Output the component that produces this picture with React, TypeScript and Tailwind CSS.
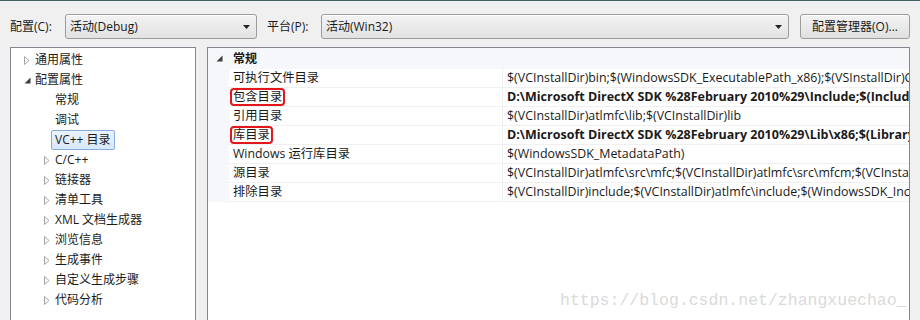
const font = "font-['Open_Sans','Noto_Sans_CJK_SC',sans-serif]";

const tree: { label: string; level: 0 | 1; state: "closed" | "open" | "none"; selected?: boolean }[] = [
  { label: "通用属性", level: 0, state: "closed" },
  { label: "配置属性", level: 0, state: "open" },
  { label: "常规", level: 1, state: "none" },
  { label: "调试", level: 1, state: "none" },
  { label: "VC++ 目录", level: 1, state: "none", selected: true },
  { label: "C/C++", level: 1, state: "closed" },
  { label: "链接器", level: 1, state: "closed" },
  { label: "清单工具", level: 1, state: "closed" },
  { label: "XML 文档生成器", level: 1, state: "closed" },
  { label: "浏览信息", level: 1, state: "closed" },
  { label: "生成事件", level: 1, state: "closed" },
  { label: "自定义生成步骤", level: 1, state: "closed" },
  { label: "代码分析", level: 1, state: "closed" },
];

// values are clipped by the grid edge, as in the dialog
const rows: { name: string; value: string; bold?: boolean; marked?: boolean }[] = [
  { name: "可执行文件目录", value: "$(VCInstallDir)bin;$(WindowsSDK_ExecutablePath_x86);$(VSInstallDir)C" },
  { name: "包含目录", value: "D:\\Microsoft DirectX SDK %28February 2010%29\\Include;$(Include", bold: true, marked: true },
  { name: "引用目录", value: "$(VCInstallDir)atlmfc\\lib;$(VCInstallDir)lib" },
  { name: "库目录", value: "D:\\Microsoft DirectX SDK %28February 2010%29\\Lib\\x86;$(Library", bold: true, marked: true },
  { name: "Windows 运行库目录", value: "$(WindowsSDK_MetadataPath)" },
  { name: "源目录", value: "$(VCInstallDir)atlmfc\\src\\mfc;$(VCInstallDir)atlmfc\\src\\mfcm;$(VCInstal" },
  { name: "排除目录", value: "$(VCInstallDir)include;$(VCInstallDir)atlmfc\\include;$(WindowsSDK_Incl" },
];

function Closed() {
  return (
    <svg width="6" height="9" viewBox="0 0 6 9" className="shrink-0">
      <path d="M0.5 0.5 L5 4.5 L0.5 8.5 Z" fill="white" stroke="#a6a6a6" strokeWidth="1" />
    </svg>
  );
}

function Open() {
  return (
    <svg width="7" height="7" viewBox="0 0 7 7" className="shrink-0">
      <path d="M6.5 0.5 L6.5 6.5 L0.5 6.5 Z" fill="#404040" />
    </svg>
  );
}

function Combo({ text, width }: { text: string; width: string }) {
  return (
    <div
      className={`${width} h-[25px] flex items-center justify-between pl-[4px] pr-[6px] rounded-[3px] border border-[#9c9c9c] bg-gradient-to-b from-[#f3f3f3] to-[#e2e2e2] shadow-[inset_0_1px_0_#fff]`}
    >
      <span className="text-[12px] text-[#1a1a1a]">{text}</span>
      <svg width="7" height="4" viewBox="0 0 7 4">
        <path d="M0 0 L7 0 L3.5 4 Z" fill="#222" />
      </svg>
    </div>
  );
}

export default function App() {
  return (
    <div className={`w-[920px] h-[320px] overflow-hidden bg-[#f0f0f0] border-t border-[#41605f] relative ${font}`}>
      {/* toolbar */}
      <div className="flex items-center h-[25px] mt-[13px] pl-[10px]">
        <span className="text-[12px] text-[#1a1a1a] w-[55px]">配置(C):</span>
        <Combo text="活动(Debug)" width="w-[192px]" />
        <span className="text-[12px] text-[#1a1a1a] ml-[10px] w-[54px]">平台(P):</span>
        <Combo text="活动(Win32)" width="w-[468px]" />
        <button className="ml-[11px] w-[110px] h-[25px] rounded-[3px] border border-[#9c9c9c] bg-gradient-to-b from-[#f3f3f3] to-[#e0e0e0] text-[12px] text-[#1a1a1a] shadow-[inset_0_1px_0_#fff]">
          配置管理器(O)...
        </button>
      </div>

      <div className="flex mt-[8px] pl-[10px] h-[300px]">
        {/* tree */}
        <div className="w-[186px] h-full bg-white border border-[#828790] pt-[2px] text-[12px] text-[#1a1a1a]">
          {tree.map((t) => (
            <div key={t.label} className={`h-[20px] flex items-center ${t.level === 0 ? "pl-[13px]" : "pl-[33px]"}`}>
              <span className="w-[11px] flex items-center">
                {t.state === "closed" && <Closed />}
                {t.state === "open" && <Open />}
              </span>
              {t.selected ? (
                <span className="-ml-[4px] h-[20px] px-[3px] flex items-center rounded-[2px] border border-[#84acdd] bg-gradient-to-b from-[#eaf3fd] to-[#d6e8fc]">
                  {t.label}
                </span>
              ) : (
                <span>{t.label}</span>
              )}
            </div>
          ))}
        </div>

        {/* property grid */}
        <div className="ml-[11px] w-[703px] h-full bg-white border border-[#828790] text-[12px] text-[#1a1a1a]">
          <div className="h-[21px] flex items-center bg-[#f5f7fb]">
            <span className="w-[21px] flex justify-center pl-[2px]">
              <Open />
            </span>
            <span className="ml-[4px] font-bold">常规</span>
          </div>
          <div className="flex">
            <div className="w-[21px] bg-[#f5f7fb]" />
            <div className="flex-1 min-w-0">
              {rows.map((r) => (
                <div key={r.name} className="h-[19px] flex border-b border-[#f0f0f0]">
                  <div className="w-[274px] shrink-0 flex items-center pl-[4px] text-[12.3px] border-r border-[#f0f0f0]">
                    {r.marked ? (
                      <span className="inline-block leading-[14px] -ml-[1px] pl-[1px] pr-[1px] rounded-[2px] ring-2 ring-[#e3161b]">
                        {r.name}
                      </span>
                    ) : (
                      r.name
                    )}
                  </div>
                  <div
                    className={`flex-1 min-w-0 flex items-center pl-[4px] whitespace-nowrap overflow-hidden ${
                      r.bold ? "font-bold text-[12.5px]" : "text-[12.4px]"
                    }`}
                  >
                    {r.value}
                  </div>
                </div>
              ))}
            </div>
          </div>
        </div>
      </div>

      <div className="absolute left-[560px] top-[288px] font-['Liberation_Mono',monospace] text-[16.5px] text-[#dadada] whitespace-nowrap">
        https://blog.csdn.net/zhangxuechao_
      </div>
    </div>
  );
}
